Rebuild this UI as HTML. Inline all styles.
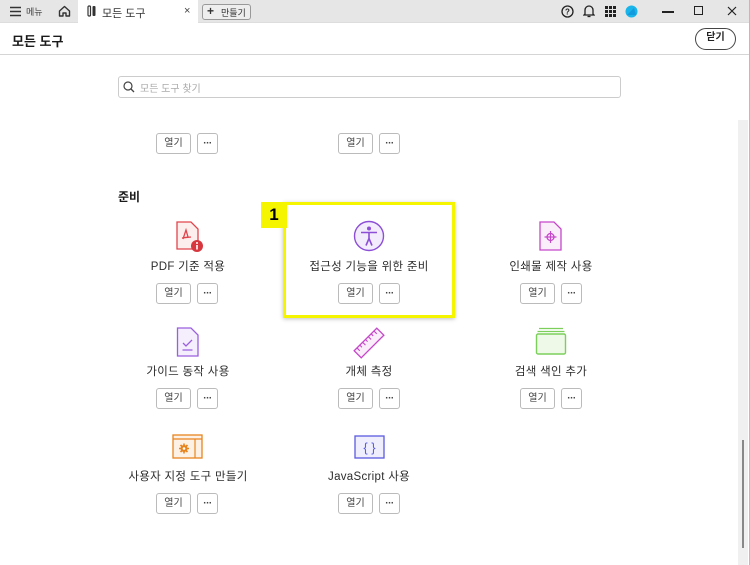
<!DOCTYPE html>
<html><head><meta charset="utf-8"><style>
*{box-sizing:border-box;margin:0;padding:0}
body{width:750px;height:565px;overflow:hidden;background:#fff;font-family:"Liberation Sans","Noto Sans CJK KR",sans-serif;color:#2c2c2c;position:relative}
.abs{position:absolute}
.tabbar{left:0;top:0;width:750px;height:23px;background:#e6e6e6;border-bottom:1px solid #ddd}
.tab{left:78px;top:0;width:120px;height:23px;background:#fff}
.t{font-size:11px;white-space:nowrap}
.btn{position:absolute;height:21px;border:1px solid #bbb;border-radius:3px;background:#fff;font-size:10px;text-align:center;line-height:19px;color:#444}
.d{font-weight:bold;letter-spacing:-0.5px}
.lbl{position:absolute;width:200px;text-align:center;font-size:11.5px;letter-spacing:0.3px;color:#2c2c2c}
</style></head><body>
<div class="abs tabbar"></div>
<div class="abs tab"></div>
<svg class="abs" style="left:10px;top:6px" width="12" height="11"><path d="M0 1.5h11M0 5.5h11M0 9.5h11" stroke="#333" stroke-width="1.4"/></svg>
<div class="abs t" style="left:26px;top:5px;font-size:9px;color:#444">메뉴</div>
<svg class="abs" style="left:58px;top:5px" width="13" height="12"><path d="M1.5 6L6.5 1.5 11.5 6V11H8V8H5V11H1.5Z" fill="none" stroke="#333" stroke-width="1.4" stroke-linejoin="round"/></svg>
<svg class="abs" style="left:87px;top:5px" width="10" height="12"><rect x="1" y="1" width="2.5" height="10" rx="1" fill="none" stroke="#333" stroke-width="1.2"/><rect x="5.5" y="1" width="3" height="10" rx="1" fill="#333"/></svg>
<div class="abs t" style="left:102px;top:5px;font-size:11px;color:#333">모든 도구</div>
<div class="abs t" style="left:184px;top:5px;font-size:11px;color:#444">×</div>
<div class="abs" style="left:202px;top:4px;width:49px;height:16px;border:1px solid #999;border-radius:3px;background:#eee"></div>
<div class="abs t" style="left:207px;top:4px;font-size:12px;font-weight:bold;color:#333">+</div>
<div class="abs t" style="left:221px;top:6px;font-size:9px;color:#333">만들기</div>
<svg class="abs" style="left:561px;top:5px" width="13" height="13"><circle cx="6.5" cy="6.5" r="5.5" fill="none" stroke="#222" stroke-width="1.3"/><text x="6.5" y="9.5" font-size="8" text-anchor="middle" font-family="Liberation Sans" font-weight="bold" fill="#222">?</text></svg>
<svg class="abs" style="left:583px;top:4px" width="12" height="14"><path d="M2 10V6a4 4 0 0 1 8 0v4l1 1H1z" fill="none" stroke="#222" stroke-width="1.3"/><path d="M4.5 12.5h3" stroke="#222" stroke-width="1.3"/></svg>
<svg class="abs" style="left:605px;top:6px" width="11" height="11" fill="#222"><rect x="0" y="0" width="3" height="3"/><rect x="4" y="0" width="3" height="3"/><rect x="8" y="0" width="3" height="3"/><rect x="0" y="4" width="3" height="3"/><rect x="4" y="4" width="3" height="3"/><rect x="8" y="4" width="3" height="3"/><rect x="0" y="8" width="3" height="3"/><rect x="4" y="8" width="3" height="3"/><rect x="8" y="8" width="3" height="3"/></svg>
<svg class="abs" style="left:625px;top:5px" width="13" height="13"><circle cx="6.5" cy="6.5" r="6" fill="#19b5ea"/><path d="M2 10L9 3 11 10z" fill="#0a7fd0" opacity=".5"/></svg>
<div class="abs" style="left:662px;top:11px;width:12px;height:1.5px;background:#222"></div>
<div class="abs" style="left:694px;top:6px;width:9px;height:9px;border:1.2px solid #222"></div>
<svg class="abs" style="left:727px;top:6px" width="10" height="10"><path d="M1 1L9 9M9 1L1 9" stroke="#222" stroke-width="1.2"/></svg>

<div class="abs" style="left:0;top:54px;width:750px;height:1px;background:#d5d5d5"></div>
<div class="abs" style="left:12px;top:31px;font-size:13px;font-weight:bold;color:#1a1a1a">모든 도구</div>
<div class="abs" style="left:695px;top:28px;width:41px;height:22px;border:1.5px solid #444;border-radius:11px;font-size:10px;font-weight:bold;text-align:center;line-height:18px;color:#222">닫기</div>

<div class="abs" style="left:118px;top:76px;width:503px;height:22px;border:1px solid #ccc;border-radius:3px"></div>
<svg class="abs" style="left:123px;top:81px" width="12" height="12"><circle cx="5" cy="5" r="4" fill="none" stroke="#444" stroke-width="1.2"/><path d="M8 8L11 11" stroke="#444" stroke-width="1.3"/></svg>
<div class="abs t" style="left:140px;top:80px;font-size:10px;color:#aaa">모든 도구 찾기</div>

<div class="abs" style="left:738px;top:120px;width:10px;height:445px;background:#f0f0f0"></div>
<div class="abs" style="left:742px;top:440px;width:2px;height:108px;background:#888"></div>
<div class="abs" style="left:749px;top:0;width:1px;height:565px;background:#bbb"></div>

<div class="btn" style="left:156px;top:133px;width:35px">열기</div><div class="btn d" style="left:197px;top:133px;width:21px">···</div>
<div class="btn" style="left:338px;top:133px;width:35px">열기</div><div class="btn d" style="left:379px;top:133px;width:21px">···</div>

<div class="abs" style="left:118px;top:188px;font-size:12px;font-weight:bold;color:#1a1a1a">준비</div>

<div class="abs" style="left:283px;top:202px;width:172px;height:116px;border:3px solid #f5f500;box-shadow:0 1px 4px rgba(0,0,0,.25)"></div>
<div class="abs" style="left:261px;top:202px;width:26px;height:26px;background:#f5f500;font-size:17px;font-weight:bold;color:#000;text-align:center;line-height:26px">1</div>

<svg class="abs" style="left:175px;top:221px" width="30" height="32"><path d="M2 1H16L23 8V28H2Z" fill="#fdeeee" stroke="#e0444c" stroke-width="1.3"/><path d="M8 18L11 9 13 16 7 17 16 16" fill="none" stroke="#e0444c" stroke-width="1.3"/><circle cx="22" cy="25" r="6" fill="#d7373f"/><rect x="21.2" y="24" width="1.6" height="4.5" fill="#fff"/><circle cx="22" cy="22" r="1" fill="#fff"/></svg>
<div class="lbl" style="left:88px;top:258px">PDF 기준 적용</div>
<div class="btn" style="left:156px;top:283px;width:35px">열기</div><div class="btn d" style="left:197px;top:283px;width:21px">···</div>

<svg class="abs" style="left:353px;top:220px" width="32" height="32"><circle cx="16" cy="16" r="14.5" fill="#f3ecfd" stroke="#8c4fd6" stroke-width="1.4"/><circle cx="16" cy="8.5" r="2" fill="#8c4fd6"/><path d="M8 12.5h16M16 12.5v6M16 18.5l-3 7M16 18.5l3 7" stroke="#8c4fd6" stroke-width="1.6" fill="none"/></svg>
<div class="lbl" style="left:269px;top:258px">접근성 기능을 위한 준비</div>
<div class="btn" style="left:338px;top:283px;width:35px">열기</div><div class="btn d" style="left:379px;top:283px;width:21px">···</div>

<svg class="abs" style="left:538px;top:221px" width="28" height="32"><path d="M2 1H16L23 8V29H2Z" fill="#fbeefb" stroke="#c547c9" stroke-width="1.3"/><circle cx="12.5" cy="16" r="3.5" fill="none" stroke="#c547c9" stroke-width="1.3"/><path d="M12.5 10v12M6.5 16h12" stroke="#c547c9" stroke-width="1.2"/></svg>
<div class="lbl" style="left:451px;top:258px">인쇄물 제작 사용</div>
<div class="btn" style="left:520px;top:283px;width:35px">열기</div><div class="btn d" style="left:561px;top:283px;width:21px">···</div>

<svg class="abs" style="left:176px;top:327px" width="26" height="32"><path d="M1.5 1H15L22 8V29H1.5Z" fill="#f4eefd" stroke="#9a5fde" stroke-width="1.3"/><path d="M7 16l3 3 6-6M6.5 23h10" fill="none" stroke="#9a5fde" stroke-width="1.3"/></svg>
<div class="lbl" style="left:88px;top:363px">가이드 동작 사용</div>
<div class="btn" style="left:156px;top:388px;width:35px">열기</div><div class="btn d" style="left:197px;top:388px;width:21px">···</div>

<svg class="abs" style="left:352px;top:326px" width="34" height="34"><g transform="rotate(-45 17 17)"><rect x="1" y="12" width="32" height="10" fill="#fbeefb" stroke="#c547c9" stroke-width="1.3"/><path d="M5 12v4M9 12v3M13 12v4M17 12v3M21 12v4M25 12v3M29 12v4" stroke="#c547c9" stroke-width="1.1"/></g></svg>
<div class="lbl" style="left:269px;top:363px">개체 측정</div>
<div class="btn" style="left:338px;top:388px;width:35px">열기</div><div class="btn d" style="left:379px;top:388px;width:21px">···</div>

<svg class="abs" style="left:535px;top:327px" width="32" height="30"><path d="M4 1.5h24M2.5 4.5h27" stroke="#7ccf5a" stroke-width="1.2"/><rect x="1.5" y="7" width="29" height="20" rx="1.5" fill="#eef9e8" stroke="#7ccf5a" stroke-width="1.4"/></svg>
<div class="lbl" style="left:451px;top:363px">검색 색인 추가</div>
<div class="btn" style="left:520px;top:388px;width:35px">열기</div><div class="btn d" style="left:561px;top:388px;width:21px">···</div>

<svg class="abs" style="left:172px;top:434px" width="32" height="26"><rect x="1" y="1" width="29" height="23" fill="#fdf1e6" stroke="#e8841e" stroke-width="1.3"/><path d="M1 5h29M23 5v19" stroke="#e8841e" stroke-width="1.2"/><path d="M12 9.5v10M7 14.5h10M8.5 11l7 7M15.5 11l-7 7" stroke="#e8841e" stroke-width="1.6"/><circle cx="12" cy="14.5" r="3.5" fill="#e8841e"/><circle cx="12" cy="14.5" r="1.3" fill="#fff"/></svg>
<div class="lbl" style="left:88px;top:468px">사용자 지정 도구 만들기</div>
<div class="btn" style="left:156px;top:493px;width:35px">열기</div><div class="btn d" style="left:197px;top:493px;width:21px">···</div>

<svg class="abs" style="left:354px;top:435px" width="31" height="25"><rect x="1" y="1" width="29" height="22" fill="#eeeefd" stroke="#5b5be0" stroke-width="1.3"/><text x="15.5" y="17" text-anchor="middle" font-size="13" font-family="Liberation Sans" fill="#5b5be0">{ }</text></svg>
<div class="lbl" style="left:269px;top:468px">JavaScript 사용</div>
<div class="btn" style="left:338px;top:493px;width:35px">열기</div><div class="btn d" style="left:379px;top:493px;width:21px">···</div>
</body></html>
